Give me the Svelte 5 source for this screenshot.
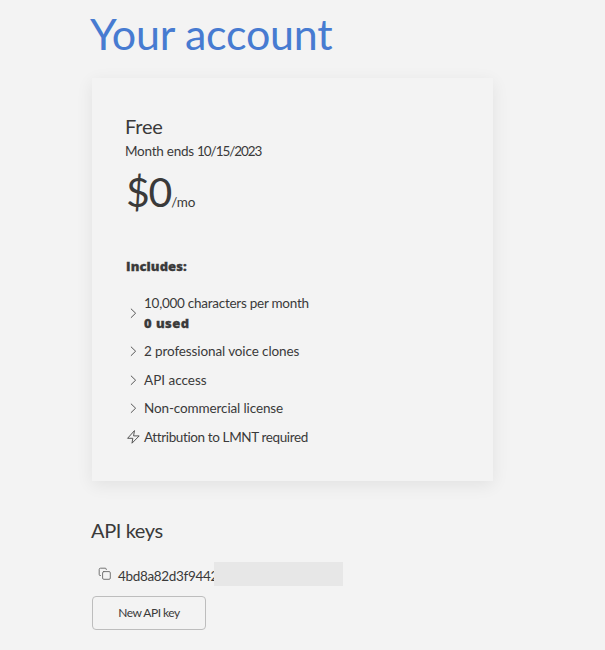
<script>
  const features = [
    { text: '2 professional voice clones', spacing: -0.11 },
    { text: 'API access', spacing: 0 },
    { text: 'Non-commercial license', spacing: -0.12 }
  ];
</script>

{#snippet chevron()}
  <svg class="icon" width="14" height="14" viewBox="0 0 14 14"><path d="M5.2 3 9.6 7.2 5.2 11.5" /></svg>
{/snippet}

<main>
  <h1>Your account</h1>
  <section class="card">
    <h2 class="plan">Free</h2>
    <p class="month">Month ends <span class="date">10/15/2023</span></p>
    <div class="price"><span class="amount">$0</span><span class="mo">/mo</span></div>
    <p class="bold includes">Includes:</p>
    <ul>
      <li>
        {@render chevron()}
        <div><span class="chars">10,000 characters per month</span><br /><span class="bold used">0 used</span></div>
      </li>
      {#each features as feature}
        <li>{@render chevron()}<span style:letter-spacing="{feature.spacing}px">{feature.text}</span></li>
      {/each}
      <li>
        <svg class="icon" width="14" height="14" viewBox="0 0 14 14"><path d="M8.2.9 1.6 8.3H6.8L6 13.2 13.2 5.9H8Z" /></svg>
        <span class="attr">Attribution to LMNT required</span>
      </li>
    </ul>
  </section>
  <h2 class="keys">API keys</h2>
  <div class="key">
    <svg class="icon copy" width="14" height="14" viewBox="0 0 14 14"><rect x="4.6" y="4.6" width="7.7" height="7.7" rx="1.2" /><path d="M2.5 8.5H2Q1.2 8.5 1.2 7.5V2.5Q1.2 1.2 2.5 1.2H7.2Q8.4 1.2 8.4 2.5" /></svg>
    <span class="value">4bd8a82d3f9442</span>
    <span class="mask"></span>
  </div>
  <button>New API key</button>
</main>

<style>
  :global(body) { margin: 0; background: #f3f3f3; }
  main { box-sizing: border-box; height: 650px; padding: 8px 112px 0 92px; overflow: hidden; font: 13.5px/20px Lato, "Liberation Sans", sans-serif; color: #3a3a3a; background: #f3f3f3; white-space: nowrap; }
  h1, h2, p, ul { margin: 0; padding: 0; font-weight: 400; }
  h1 { font-size: 43px; line-height: 52px; color: #477bd1; margin-left: -2px; letter-spacing: -.25px; }
  h2 { font-size: 20px; line-height: 28px; letter-spacing: -.4px; }
  .plan { letter-spacing: -.2px; }
  .card { box-sizing: border-box; height: 403px; margin-top: 18px; padding: 34px 33px; background: #f3f3f3; box-shadow: 0 4px 16px rgba(0, 0, 0, .075); }
  .month { margin-top: 1px; letter-spacing: -.25px; }
  .date { letter-spacing: -1.05px; }
  .price { line-height: 50px; margin-top: 6px; }
  .amount { font-size: 41px; letter-spacing: -1.2px; margin-left: 1px; }
  .mo { letter-spacing: -.15px; }
  .bold { font-family: "Open Sans", "Noto Sans", sans-serif; font-weight: 800; font-size: 13px; -webkit-text-stroke: .3px #3a3a3a; }
  .includes { margin: 29px 0 0 1px; letter-spacing: .1px; }
  .used { letter-spacing: .45px; }
  .chars { letter-spacing: -.26px; }
  .attr { letter-spacing: -.38px; }
  ul { list-style: none; margin-top: 17px; display: flex; flex-direction: column; gap: 8.4px; }
  li { display: flex; align-items: center; gap: 4px; padding-left: 1px; }
  li .icon { flex: none; }
  .icon { fill: none; stroke: #444; stroke-width: .9; stroke-linejoin: round; stroke-linecap: round; }
  .keys { margin: 35px 0 0 -1px; }
  .key { display: flex; height: 24px; margin: 18px 0 10px 6px; }
  .copy { margin: 5px 6px 0 0; stroke: #666; }
  .value { width: 96px; line-height: 28px; letter-spacing: -.33px; }
  .mask { position: relative; width: 129px; height: 24px; background: #e7e7e7; }
  button { display: block; box-sizing: border-box; width: 114px; height: 34px; border: 1px solid #bdbdbd; border-radius: 4px; padding: 0 0 2px; background: transparent; color: #3a3a3a; font: 12px Lato, sans-serif; letter-spacing: -.5px; }
</style>
